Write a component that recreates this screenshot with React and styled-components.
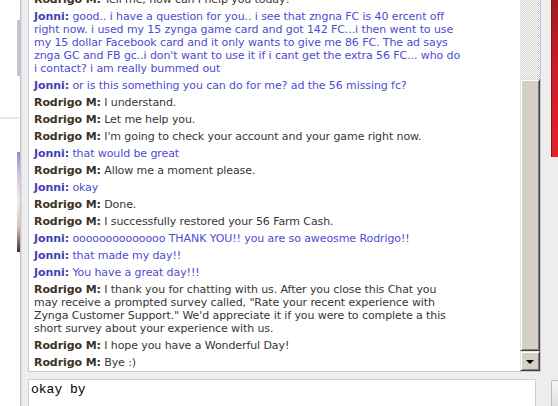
import styled, { createGlobalStyle } from "styled-components";

const GlobalStyle = createGlobalStyle`
  body {
    margin: 0;
    background: #fff;
    overflow: hidden;
  }
`

const Page = styled.div`
  display: flex;
  width: 558px;
  height: 406px;
  overflow: hidden;
`

const Gutter = styled.div`
  width: 20px;
  flex-shrink: 0;
  display: flex;
  flex-direction: column;
  align-items: flex-end;
`

const GutterBar = styled.div`
  width: 3px;
  height: 56px;
  margin-top: 20px;
  background: #c3c7d3;
`

const GutterRule = styled.div`
  align-self: stretch;
  height: 2px;
  margin: 41px 1px 0 0;
  background: #e6e6e6;
`

const GutterPhoto = styled.div`
  width: 3px;
  height: 100px;
  margin-top: 33px;
  background: linear-gradient(to bottom, #8f8fd0, #d8c8e0 25%, #f4ece8 50%, #d8c4b0 75%, #3c3038);
`

const Panel = styled.div`
  flex: 1;
  min-width: 0;
  overflow: hidden;
  background: #ededed;
  border-left: 1px solid #c2c2c2;
  box-shadow: inset 1px 0 #dedede;
  padding-left: 7px;
  display: flex;
  flex-direction: column;
`

const TopRow = styled.div`
  display: flex;
  align-items: flex-start;
  gap: 10px;
`

const ChatBox = styled.div`
  width: 513px;
  height: 372px;
  box-sizing: border-box;
  flex-shrink: 0;
  background: #fff;
  border: 1px solid #c3c8da;
  border-top: none;
  display: flex;
`

const Log = styled.div`
  flex: 1;
  display: flex;
  flex-direction: column;
  justify-content: flex-end;
  overflow: hidden;
  padding: 0 5px 0;
  font-family: "DejaVu Sans", Verdana, sans-serif;
  font-size: 11px;
  line-height: 13px;
  letter-spacing: -0.09px;
  white-space: nowrap;
`

const Message = styled.div`
  padding: 2px 0;
  color: ${(p) => (p.$agent ? "#363636" : "#4c4cd2")};
`

const Name = styled.b`
  color: ${(p) => (p.$agent ? "#3a3226" : "#3f3fb4")};
`

const ScrollBar = styled.div`
  width: 20px;
  display: flex;
  flex-direction: column;
`

const Track = styled.div`
  height: 79px;
  background: repeating-conic-gradient(#d4d0c8 0 25%, #fff 0 50%) 0 0 / 2px 2px;
`

const bevel = `
  box-sizing: border-box;
  background: #d4d0c8;
  border: 1px solid;
  border-color: #e4e2dc #404040 #404040 #e4e2dc;
  box-shadow: inset 1px 1px #fff, inset -1px -1px #808080;
`

const Thumb = styled.div`
  ${bevel}
  height: 272px;
`

const ArrowButton = styled.div`
  ${bevel}
  height: 20px;
  display: flex;
  align-items: center;
  justify-content: center;

  &::after {
    content: "";
    border-left: 4px solid transparent;
    border-right: 4px solid transparent;
    border-top: 4px solid #000;
    margin-top: 1px;
  }
`

const RedStrip = styled.div`
  width: 8px;
  height: 157px;
  flex-shrink: 0;
  background: linear-gradient(to bottom, #9e1b1d, #cc1f26 45%, #e3222a);
  box-shadow: inset 1px 0 #8a1618;
`

const InputRow = styled.div`
  display: flex;
  align-items: flex-start;
  gap: 15px;
  margin-top: 7px;
`

const Input = styled.textarea`
  width: 508px;
  height: 40px;
  flex-shrink: 0;
  box-sizing: border-box;
  margin: 0;
  padding: 2px 2px;
  border: 1px solid #ccd0dc;
  background: #fff;
  resize: none;
  outline: none;
  font-family: "Liberation Mono", "Courier New", monospace;
  font-size: 13px;
  line-height: 15px;
  color: #000;
`

const SendButton = styled.button`
  width: 60px;
  height: 30px;
  flex-shrink: 0;
  margin-top: 1px;
  border: 1px solid #bcbcbc;
  border-radius: 2px;
  background: linear-gradient(to bottom, #f6f6f6, #dcdcdc);
`

const messages = [
  { agent: true, lines: ["Tell me, how can I help you today!"] },
  {
    lines: [
      "good.. i have a question for you.. i see that zngna FC is 40 ercent off",
      "right now. i used my 15 zynga game card and got 142 FC...i then went to use",
      "my 15 dollar Facebook card and it only wants to give me 86 FC. The ad says",
      "znga GC and FB gc..i don't want to use it if i cant get the extra 56 FC... who do",
      "i contact? i am really bummed out",
    ],
  },
  { lines: ["or is this something you can do for me? ad the 56 missing fc?"] },
  { agent: true, lines: ["I understand."] },
  { agent: true, lines: ["Let me help you."] },
  { agent: true, lines: ["I'm going to check your account and your game right now."] },
  { lines: ["that would be great"] },
  { agent: true, lines: ["Allow me a moment please."] },
  { lines: ["okay"] },
  { agent: true, lines: ["Done."] },
  { agent: true, lines: ["I successfully restored your 56 Farm Cash."] },
  { lines: ["oooooooooooooo THANK YOU!! you are so aweosme Rodrigo!!"] },
  { lines: ["that made my day!!"] },
  { lines: ["You have a great day!!!"] },
  {
    agent: true,
    lines: [
      "I thank you for chatting with us. After you close this Chat you",
      "may receive a prompted survey called, \"Rate your recent experience with",
      "Zynga Customer Support.\" We'd appreciate it if you were to complete a this",
      "short survey about your experience with us.",
    ],
  },
  { agent: true, lines: ["I hope you have a Wonderful Day!"] },
  { agent: true, lines: ["Bye :)"] },
];

export default function App() {
  return (
    <Page>
      <GlobalStyle />
      <Gutter>
        <GutterBar />
        <GutterRule />
        <GutterPhoto />
      </Gutter>

      <Panel>
        <TopRow>
          <ChatBox>
            <Log>
              {messages.map((m, i) => (
                <Message key={i} $agent={m.agent}>
                  <Name $agent={m.agent}>{m.agent ? "Rodrigo M:" : "Jonni:"}</Name>{" "}
                  {m.lines.map((line, j) => (
                    <span key={j}>
                      {j > 0 && <br />}
                      {line}
                    </span>
                  ))}
                </Message>
              ))}
            </Log>
            <ScrollBar>
              <Track />
              <Thumb />
              <ArrowButton />
            </ScrollBar>
          </ChatBox>
          <RedStrip />
        </TopRow>

        <InputRow>
          <Input defaultValue="okay by" />
          <SendButton />
        </InputRow>
      </Panel>
    </Page>
  );
}
